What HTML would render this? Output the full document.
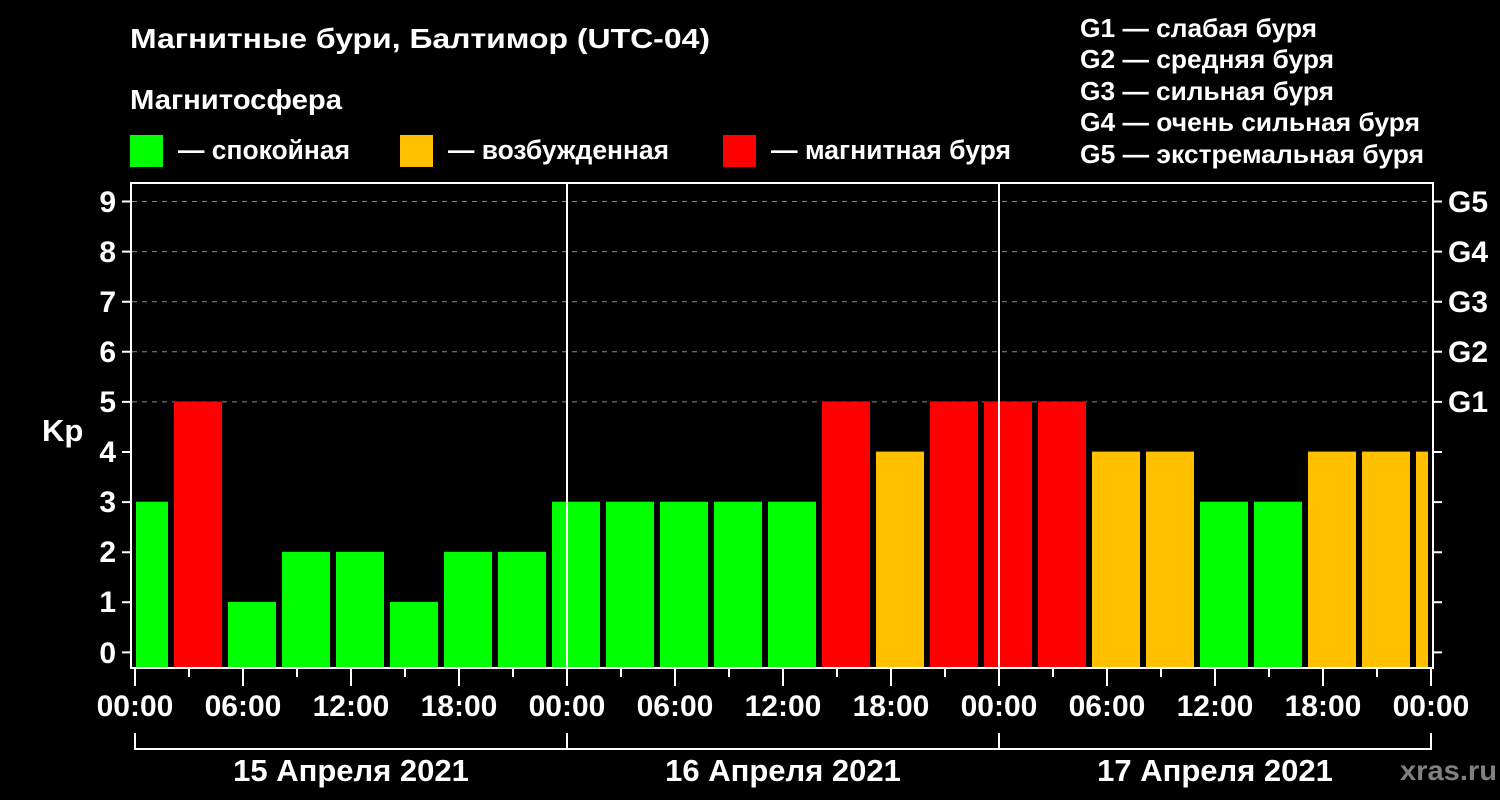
<!DOCTYPE html>
<html><head><meta charset="utf-8"><style>
html,body{margin:0;padding:0;background:#000;}
svg{display:block;font-family:"Liberation Sans",sans-serif;font-weight:bold;}
</style></head><body>
<svg width="1500" height="800" viewBox="0 0 1500 800" xmlns="http://www.w3.org/2000/svg">
<rect width="1500" height="800" fill="#000"/>
<g fill="#fff">
<text x="130" y="48" font-size="28" textLength="580" lengthAdjust="spacingAndGlyphs">Магнитные бури, Балтимор (UTC-04)</text>
<text x="130" y="109" font-size="28" textLength="212" lengthAdjust="spacingAndGlyphs">Магнитосфера</text>
<text x="178" y="159" font-size="27" textLength="172" lengthAdjust="spacingAndGlyphs">— спокойная</text>
<text x="448" y="159" font-size="27" textLength="221" lengthAdjust="spacingAndGlyphs">— возбужденная</text>
<text x="771" y="159" font-size="27" textLength="240" lengthAdjust="spacingAndGlyphs">— магнитная буря</text>
<g font-size="26">
<text x="1080" y="37" textLength="237" lengthAdjust="spacingAndGlyphs">G1 — слабая буря</text>
<text x="1080" y="68" textLength="254" lengthAdjust="spacingAndGlyphs">G2 — средняя буря</text>
<text x="1080" y="100" textLength="254" lengthAdjust="spacingAndGlyphs">G3 — сильная буря</text>
<text x="1080" y="131" textLength="340" lengthAdjust="spacingAndGlyphs">G4 — очень сильная буря</text>
<text x="1080" y="163" textLength="344" lengthAdjust="spacingAndGlyphs">G5 — экстремальная буря</text>
</g>
</g>
<rect x="130" y="135" width="33" height="32" fill="#00ff00"/>
<rect x="400" y="135" width="33" height="32" fill="#ffc000"/>
<rect x="723" y="135" width="33" height="32" fill="#ff0000"/>

<g stroke="#888" stroke-width="1" stroke-dasharray="5,5">
<line x1="132" y1="201.5" x2="1432" y2="201.5"/>
<line x1="132" y1="251.6" x2="1432" y2="251.6"/>
<line x1="132" y1="301.7" x2="1432" y2="301.7"/>
<line x1="132" y1="351.8" x2="1432" y2="351.8"/>
<line x1="132" y1="401.9" x2="1432" y2="401.9"/>
</g>

<g>
<rect x="136" y="501.7" width="32" height="166.3" fill="#00ff00"/>
<rect x="174" y="401.5" width="48" height="266.5" fill="#ff0000"/>
<rect x="228" y="601.9" width="48" height="66.1" fill="#00ff00"/>
<rect x="282" y="551.8" width="48" height="116.2" fill="#00ff00"/>
<rect x="336" y="551.8" width="48" height="116.2" fill="#00ff00"/>
<rect x="390" y="601.9" width="48" height="66.1" fill="#00ff00"/>
<rect x="444" y="551.8" width="48" height="116.2" fill="#00ff00"/>
<rect x="498" y="551.8" width="48" height="116.2" fill="#00ff00"/>
<rect x="552" y="501.7" width="48" height="166.3" fill="#00ff00"/>
<rect x="606" y="501.7" width="48" height="166.3" fill="#00ff00"/>
<rect x="660" y="501.7" width="48" height="166.3" fill="#00ff00"/>
<rect x="714" y="501.7" width="48" height="166.3" fill="#00ff00"/>
<rect x="768" y="501.7" width="48" height="166.3" fill="#00ff00"/>
<rect x="822" y="401.5" width="48" height="266.5" fill="#ff0000"/>
<rect x="876" y="451.6" width="48" height="216.4" fill="#ffc000"/>
<rect x="930" y="401.5" width="48" height="266.5" fill="#ff0000"/>
<rect x="984" y="401.5" width="48" height="266.5" fill="#ff0000"/>
<rect x="1038" y="401.5" width="48" height="266.5" fill="#ff0000"/>
<rect x="1092" y="451.6" width="48" height="216.4" fill="#ffc000"/>
<rect x="1146" y="451.6" width="48" height="216.4" fill="#ffc000"/>
<rect x="1200" y="501.7" width="48" height="166.3" fill="#00ff00"/>
<rect x="1254" y="501.7" width="48" height="166.3" fill="#00ff00"/>
<rect x="1308" y="451.6" width="48" height="216.4" fill="#ffc000"/>
<rect x="1362" y="451.6" width="48" height="216.4" fill="#ffc000"/>
<rect x="1416" y="451.6" width="12" height="216.4" fill="#ffc000"/>
</g>

<g stroke="#fff" stroke-width="2" fill="none">
<rect x="131" y="183" width="1302" height="485"/>
<line x1="567" y1="183" x2="567" y2="668"/>
<line x1="999" y1="183" x2="999" y2="668"/>
<path d="M122 201.5H131M122 251.6H131M122 301.7H131M122 351.8H131M122 401.9H131M122 452H131M122 502.1H131M122 552.2H131M122 602.3H131M122 652.4H131"/>
<path d="M1433 201.5H1442M1433 251.6H1442M1433 301.7H1442M1433 351.8H1442M1433 401.9H1442M1433 452H1442M1433 502.1H1442M1433 552.2H1442M1433 602.3H1442M1433 652.4H1442"/>
<path d="M135 668V686M243 668V686M351 668V686M459 668V686M567 668V686M675 668V686M783 668V686M891 668V686M999 668V686M1107 668V686M1215 668V686M1323 668V686M1431 668V686"/>
<path d="M189 668V677M297 668V677M405 668V677M513 668V677M621 668V677M729 668V677M837 668V677M945 668V677M1053 668V677M1161 668V677M1269 668V677M1377 668V677"/>
<path d="M135 733V749H1431V733M567 733V749M999 733V749"/>
</g>

<g fill="#fff" font-size="30" text-anchor="end">
<text x="116" y="212">9</text>
<text x="116" y="262">8</text>
<text x="116" y="312">7</text>
<text x="116" y="362">6</text>
<text x="116" y="412">5</text>
<text x="116" y="462">4</text>
<text x="116" y="512">3</text>
<text x="116" y="562">2</text>
<text x="116" y="612">1</text>
<text x="116" y="663">0</text>
</g>
<text x="42" y="441" fill="#fff" font-size="31">Kp</text>
<g fill="#fff" font-size="30">
<text x="1448" y="212">G5</text>
<text x="1448" y="262">G4</text>
<text x="1448" y="312">G3</text>
<text x="1448" y="362">G2</text>
<text x="1448" y="412">G1</text>
</g>
<g fill="#fff" font-size="30" text-anchor="middle">
<text x="135" y="716">00:00</text>
<text x="243" y="716">06:00</text>
<text x="351" y="716">12:00</text>
<text x="459" y="716">18:00</text>
<text x="567" y="716">00:00</text>
<text x="675" y="716">06:00</text>
<text x="783" y="716">12:00</text>
<text x="891" y="716">18:00</text>
<text x="999" y="716">00:00</text>
<text x="1107" y="716">06:00</text>
<text x="1215" y="716">12:00</text>
<text x="1323" y="716">18:00</text>
<text x="1431" y="716">00:00</text>
<text x="351" y="781" font-size="31">15 Апреля 2021</text>
<text x="783" y="781" font-size="31">16 Апреля 2021</text>
<text x="1215" y="781" font-size="31">17 Апреля 2021</text>
</g>
<text x="1400" y="780" fill="#808080" font-size="28" textLength="97" lengthAdjust="spacingAndGlyphs">xras.ru</text>
</svg>
</body></html>
